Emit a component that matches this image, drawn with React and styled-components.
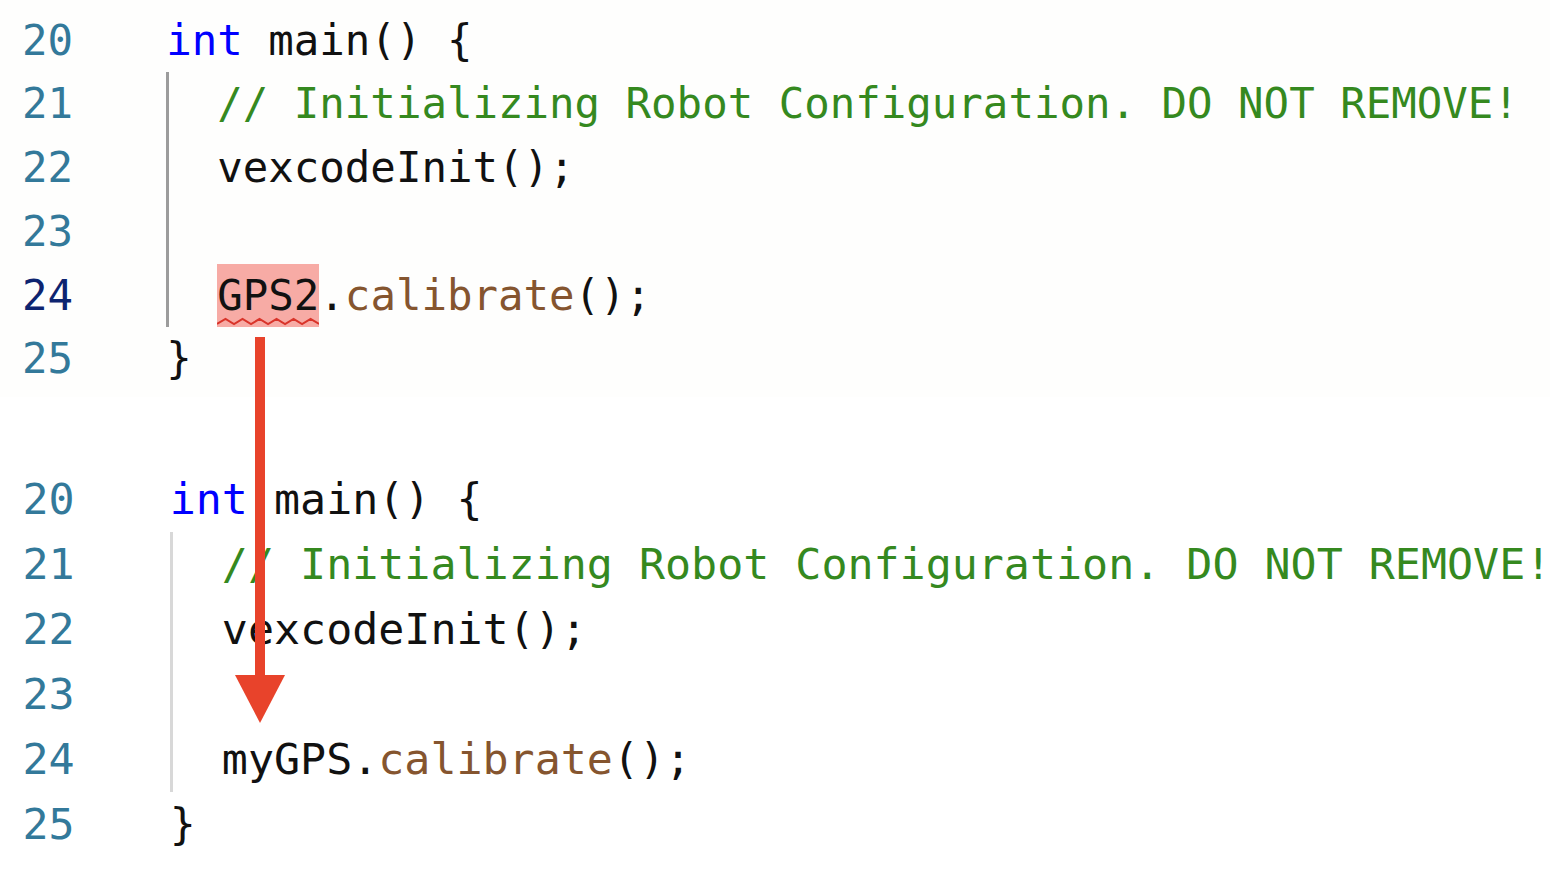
import React from 'react';
import styled, { createGlobalStyle } from 'styled-components';

const GlobalStyle = createGlobalStyle`
  html, body {
    margin: 0;
    padding: 0;
    background: #ffffff;
  }
  body {
    font-family: "DejaVu Sans Mono", "Liberation Mono", monospace;
  }
`;

const colors = {
  lineNo: '#33799a',
  lineNoActive: '#0d2470',
  keyword: '#0000ff',
  comment: '#35891f',
  fn: '#85552f',
  text: '#111111',
  error: '#f7aba5',
  squiggle: '#d9342a',
  arrow: '#e8432b',
};

const Page = styled.div`
  position: relative;
  width: 1550px;
  height: 878px;
  overflow: hidden;
  display: flex;
  flex-direction: column;
`;

const Block = styled.div`
  font-size: ${({ $size }) => $size}px;
  line-height: ${({ $lh }) => $lh}px;
  background: ${({ $bg }) => $bg};
  padding-top: ${({ $top }) => $top}px;
  padding-bottom: ${({ $bottom }) => $bottom}px;
  white-space: pre;
`;

const Spacer = styled.div`
  height: ${({ $h }) => $h}px;
  flex: none;
`;

const Row = styled.div`
  display: grid;
  grid-template-columns: 3.92em 1fr;
  height: ${({ $lh }) => $lh}px;
`;

const LineNo = styled.span`
  padding-left: 0.52em;
  color: ${({ $active }) => ($active ? colors.lineNoActive : colors.lineNo)};
`;

const Code = styled.div`
  display: flex;
  color: ${colors.text};
`;

const Indent = styled.span`
  width: 2ch;
  flex: none;
  box-sizing: border-box;
  border-left: 3px solid ${({ $guide }) => $guide};
`;

const Tok = styled.span`
  color: ${({ $kind }) =>
    $kind === 'kw'
      ? colors.keyword
      : $kind === 'comment'
      ? colors.comment
      : $kind === 'fn'
      ? colors.fn
      : colors.text};
`;

const ErrorTok = styled.span`
  position: relative;
  background: ${colors.error};
  color: ${colors.text};
`;

const Squiggle = styled.svg`
  position: absolute;
  left: 0;
  bottom: 1px;
  width: 100%;
  height: 9px;
`;

const Arrow = styled.svg`
  position: absolute;
  left: 0;
  top: 0;
  width: 1550px;
  height: 878px;
  pointer-events: none;
`;

const wave = (() => {
  let d = 'M0 7';
  for (let i = 0; i < 6; i++) {
    const x = i * 17;
    d += ` L${x + 8.5} 2 L${x + 17} 7`;
  }
  return d;
})();

const makeLines = (name) => [
  { n: 20, indent: 0, toks: [['kw', 'int'], ['', ' main() {']] },
  {
    n: 21,
    indent: 1,
    toks: [['comment', '// Initializing Robot Configuration. DO NOT REMOVE!']],
  },
  { n: 22, indent: 1, toks: [['', 'vexcodeInit();']] },
  { n: 23, indent: 1, toks: [] },
  { n: 24, indent: 1, toks: [name, ['', '.'], ['fn', 'calibrate'], ['', '();']] },
  { n: 25, indent: 0, toks: [['', '}']] },
];

const CodeBlock = ({ lines, size, lh, top, bottom, bg, guide, active }) => (
  <Block $size={size} $lh={lh} $top={top} $bottom={bottom} $bg={bg}>
    {lines.map((line) => (
      <Row key={line.n} $lh={lh}>
        <LineNo $active={line.n === active}>{line.n}</LineNo>
        <Code>
          {line.indent > 0 && <Indent $guide={guide} />}
          {line.toks.map(([kind, text], i) =>
            kind === 'error' ? (
              <ErrorTok key={i}>
                {text}
                <Squiggle viewBox="0 0 102 9" preserveAspectRatio="none">
                  <path d={wave} fill="none" stroke={colors.squiggle} strokeWidth="2" />
                </Squiggle>
              </ErrorTok>
            ) : (
              <Tok key={i} $kind={kind}>
                {text}
              </Tok>
            )
          )}
        </Code>
      </Row>
    ))}
  </Block>
);

export default function App() {
  return (
    <>
      <GlobalStyle />
      <Page>
        <CodeBlock
          lines={makeLines(['error', 'GPS2'])}
          size={42.4}
          lh={63.8}
          top={8.5}
          bottom={6}
          bg="#fefefd"
          guide="#9c9c9c"
          active={24}
        />
        <Spacer $h={70} />
        <CodeBlock
          lines={makeLines(['', 'myGPS'])}
          size={43.3}
          lh={65}
          top={0}
          bottom={0}
          bg="#ffffff"
          guide="#d8d8d8"
        />
        <Arrow viewBox="0 0 1550 878">
          <rect x="255" y="337" width="10" height="342" fill={colors.arrow} />
          <polygon points="235,675 285,675 260,723" fill={colors.arrow} />
        </Arrow>
      </Page>
    </>
  );
}
